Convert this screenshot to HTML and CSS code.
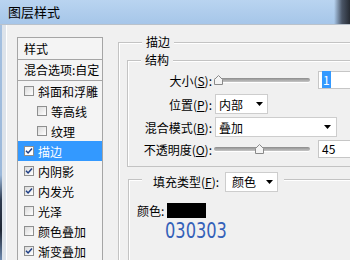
FILE: index.html
```html
<!DOCTYPE html>
<html lang="zh-CN">
<head>
  <meta charset="UTF-8" />
  <link rel="stylesheet" href="styles.css">
</head>
<body>
  <div class="titlebar">图层样式</div>

  <div class="window">
    <div class="frame"></div>

    <div class="content">
      <!-- Style list on the left -->
      <div class="styles-list">
        <div class="list-head">样式</div>
        <div class="list-blend">混合选项:自定</div>
        <div class="item"><span class="check"></span>斜面和浮雕</div>
        <div class="item sub"><span class="check"></span>等高线</div>
        <div class="item sub"><span class="check"></span>纹理</div>
        <div class="item active"><span class="check checked"><svg viewBox="0 0 8 8"><path d="M1 3.8 L3.1 6 L7 1.6" /></svg></span>描边</div>
        <div class="item"><span class="check checked"><svg viewBox="0 0 8 8"><path d="M1 3.8 L3.1 6 L7 1.6" /></svg></span>内阴影</div>
        <div class="item"><span class="check checked"><svg viewBox="0 0 8 8"><path d="M1 3.8 L3.1 6 L7 1.6" /></svg></span>内发光</div>
        <div class="item"><span class="check"></span>光泽</div>
        <div class="item"><span class="check"></span>颜色叠加</div>
        <div class="item"><span class="check checked"><svg viewBox="0 0 8 8"><path d="M1 3.8 L3.1 6 L7 1.6" /></svg></span>渐变叠加</div>
      </div>

      <!-- Stroke settings -->
      <div class="group stroke-group">
        <div class="legend">描边</div>

        <div class="group inner-group">
          <div class="legend legend-inner">结构</div>
          <div class="form">
            <div class="label">大小(<u>S</u>):</div>
            <div class="slider-row">
              <div class="slider">
                <div class="track"></div>
                <svg class="thumb" viewBox="0 0 9 10"><polygon points="0.5,9.5 0.5,4.5 4.5,0.5 8.5,4.5 8.5,9.5" /></svg>
              </div>
              <div class="num"><span class="sel">1</span></div>
            </div>

            <div class="label">位置(<u>P</u>):</div>
            <div class="ctrl">
              <div class="select select-pos">内部<svg class="arrow" viewBox="0 0 7 4"><polygon points="0,0 7,0 3.5,4" /></svg></div>
            </div>

            <div class="label">混合模式(<u>B</u>):</div>
            <div class="ctrl">
              <div class="select select-mode">叠加<svg class="arrow" viewBox="0 0 7 4"><polygon points="0,0 7,0 3.5,4" /></svg></div>
            </div>

            <div class="label">不透明度(<u>O</u>):</div>
            <div class="slider-row">
              <div class="slider">
                <div class="track"></div>
                <svg class="thumb thumb-opacity" viewBox="0 0 9 10"><polygon points="0.5,9.5 0.5,4.5 4.5,0.5 8.5,4.5 8.5,9.5" /></svg>
              </div>
              <div class="num">45</div>
            </div>
          </div>
        </div>

        <div class="group fill-group">
          <div class="legend legend-fill">
            <span>填充类型(<u>F</u>):</span>
            <div class="select select-fill">颜色<svg class="arrow" viewBox="0 0 7 4"><polygon points="0,0 7,0 3.5,4" /></svg></div>
          </div>
          <div class="color-row">
            <span>颜色:</span>
            <span class="swatch"></span>
          </div>
          <div class="hex"><span>030303</span></div>
        </div>
      </div>
    </div>
  </div>
</body>
</html>
```

FILE: styles.css
```css
body {
  margin: 0;
  width: 350px;
  height: 260px;
  overflow: hidden;
  background-color: #f0f0f0;
  font-family: "Noto Sans CJK SC", "Liberation Sans", sans-serif;
  font-size: 12px;
  color: #000;
}

.titlebar {
  height: 24px;
  line-height: 24px;
  padding-left: 8px;
  font-size: 13px;
  border-bottom: 1px solid #b9c2cc;
  background:
    linear-gradient(to right, rgba(0, 0, 0, 0) 334px, #4a5566 342px, #262b33 350px),
    linear-gradient(#b9d4f0, #a6c6e9);
}

.window {
  display: flex;
  height: 235px;
}

.frame {
  width: 7px;
  flex: none;
  background:
    linear-gradient(#a4c0e0 0, #9bb8da 150px, #2e3b50 175px, #1e2633 205px, #6f8bb0 235px) left / 2px 100% no-repeat,
    linear-gradient(to right, #dde3ea 0, #dde3ea 4px, #ffffff 4px) 2px 0 / 5px 100% no-repeat;
}

.content {
  flex: 1;
  min-width: 0;
  display: flex;
  align-items: flex-start;
  padding: 12px 0 0 10px;
  overflow: hidden;
}

/* left list */
.styles-list {
  width: 86px;
  height: 240px;
  flex: none;
  box-sizing: border-box;
  border: 1px solid #a5a5a5;
  background-color: #f4f4f4;
}

.list-head {
  height: 21px;
  line-height: 21px;
  padding-left: 6px;
  border-bottom: 1px solid #a5a5a5;
}

.list-blend {
  height: 20px;
  line-height: 20px;
  padding-left: 6px;
  border-bottom: 1px solid #a5a5a5;
  white-space: nowrap;
}

.item {
  height: 20px;
  display: flex;
  align-items: center;
  gap: 4px;
  padding-left: 6px;
  white-space: nowrap;
}

.item.sub {
  padding-left: 19px;
}

.item.active {
  background-color: #3399ff;
  color: #fff;
}

.check {
  width: 10px;
  height: 10px;
  flex: none;
  box-sizing: border-box;
  border: 1px solid #8e8f8f;
  background: linear-gradient(135deg, #dadada, #ffffff);
  display: flex;
}

.item.active .check {
  background: #fff;
}

.check svg {
  width: 8px;
  height: 8px;
}

.check path {
  fill: none;
  stroke: #1f3f86;
  stroke-width: 1.5;
}

/* group boxes */
.group {
  box-sizing: border-box;
  border: 1px solid #c3c3c3;
  border-right: none;
  box-shadow: inset 1px 1px 0 #ffffff;
}

.legend {
  width: max-content;
  height: 16px;
  line-height: 16px;
  margin: -9px 0 0 15px;
  padding: 0 4px;
  background-color: #f0f0f0;
}

.stroke-group {
  width: 262px;
  height: 240px;
  flex: none;
  margin: 5px 0 0 15px;
  padding-left: 8px;
}

.inner-group {
  margin-top: 10px;
}

.legend-inner {
  margin-left: 13px;
}

.form {
  display: grid;
  grid-template-columns: 84px 1fr;
  grid-template-rows: 24px 24px 22px 22px;
  column-gap: 2px;
  padding-bottom: 6px;
}

.label {
  display: flex;
  align-items: center;
  justify-content: flex-end;
  white-space: nowrap;
}

.ctrl,
.slider-row {
  display: flex;
  align-items: center;
}

.slider-row {
  gap: 8px;
}

.slider {
  position: relative;
  width: 96px;
  height: 12px;
}

.track {
  margin-top: 4px;
  height: 4px;
  border-radius: 2px;
  background: linear-gradient(#8c8c8c, #c6c6c6);
  box-shadow: 0 1px 0 #ffffff;
}

.thumb {
  position: absolute;
  top: 1px;
  left: 0;
  width: 9px;
  height: 10px;
}

.thumb polygon {
  fill: #f4f4f4;
  stroke: #8a8a8a;
}

.thumb-opacity {
  left: 41px;
}

.num {
  width: 40px;
  height: 18px;
  box-sizing: border-box;
  border: 1px solid #c6c6c6;
  background-color: #fff;
  padding-left: 3px;
  line-height: 16px;
}

.sel {
  background-color: #3399ff;
  color: #fff;
  padding: 0 1px;
}

.select {
  height: 20px;
  box-sizing: border-box;
  border: 1px solid #cdcdcd;
  background-color: #fff;
  display: flex;
  align-items: center;
  justify-content: space-between;
  padding: 0 4px 0 3px;
}

.arrow {
  width: 7px;
  height: 4px;
}

.select-pos {
  width: 53px;
  margin-left: 1px;
}

.select-mode {
  width: 122px;
  margin-left: 1px;
  padding-right: 5px;
}

/* fill */
.fill-group {
  height: 100px;
  margin: 12px 0 0 1px;
}

.legend-fill {
  height: 20px;
  line-height: 20px;
  margin: -8px 0 0 13px;
  padding: 0 6px 0 11px;
  display: flex;
  align-items: center;
  gap: 6px;
}

.select-fill {
  width: 53px;
  padding-left: 6px;
}

.color-row {
  display: flex;
  align-items: center;
  gap: 3px;
  height: 15px;
  margin-top: 11px;
  padding-left: 8px;
}

.swatch {
  width: 39px;
  height: 15px;
  background-color: #000;
}

.hex {
  padding-left: 36px;
  font-family: "DejaVu Sans Condensed", "DejaVu Sans", sans-serif;
  font-size: 22px;
  line-height: 26px;
  color: #3461b9;
}

.hex span {
  display: inline-block;
  transform: scaleX(0.82);
  transform-origin: left center;
}
```
